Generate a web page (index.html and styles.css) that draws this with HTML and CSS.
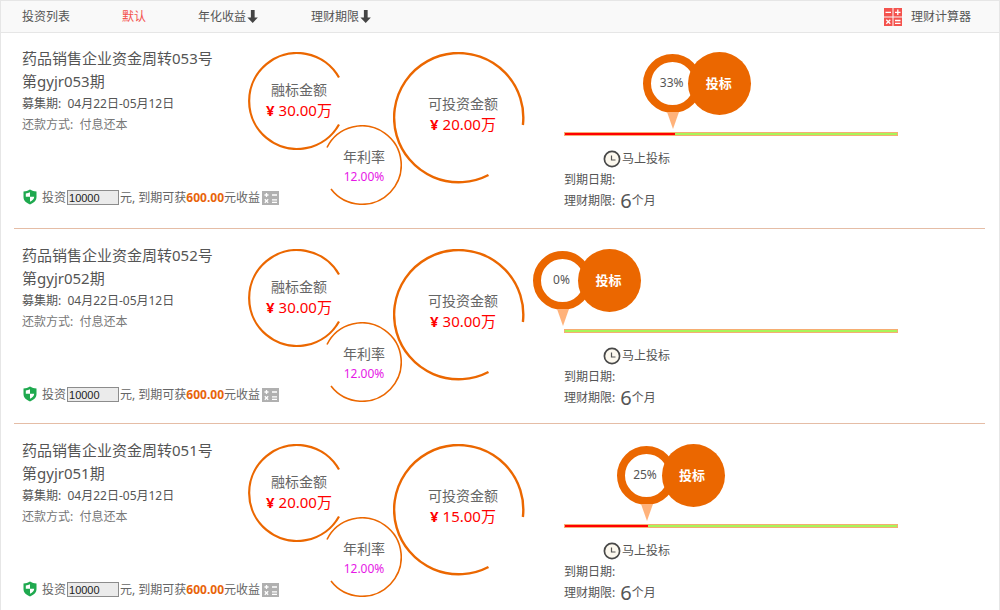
FILE: index.html
```html
<!DOCTYPE html>
<html lang="zh-CN">
<head>
<meta charset="utf-8">
<title>投资列表</title>
<link rel="stylesheet" href="styles.css">
</head>
<body>
<svg class="sprite" aria-hidden="true">
  <symbol id="arrow" viewBox="0 0 10 14"><path d="M3.500 1h3.500v7h3L5.200 13 .2 8h3.300z" fill="#444"/></symbol>
  <symbol id="calculator" viewBox="0 0 20 20">
    <path d="M1 1h8.500v8.500H1zM10.500 1H19v8.500h-8.500zM1 10.500h8.500V19H1zM10.500 10.500H19V19h-8.500z" fill="#f4524d"/>
    <path d="M2.500 5.300H8M12 5.300h5.500M14.800 2.500V8M3.300 12.700l4 4M7.300 12.700l-4 4M12 13.500h5.500M12 16.300h5.500" stroke="#fff" stroke-width="1.300" fill="none"/>
  </symbol>
  <symbol id="sums" viewBox="0 0 17 14">
    <path d="M0 0h17v14H0z" fill="#b0b0b0"/>
    <path d="M2.500 4h4M4.500 2v4M10 4h5M2.800 8.300l3.400 3.400M6.200 8.300l-3.400 3.400M10 8.800h5M10 11.300h5" stroke="#fff" stroke-width="1.300" fill="none"/>
  </symbol>
  <symbol id="shield" viewBox="0 0 14 16">
    <path d="M7 .5c2 1.300 4 1.900 6.500 2V8c0 3.500-2.500 5.800-6.500 7.500C3 13.800.5 11.500.5 8V2.500c2.500-.1 4.500-.7 6.500-2z" fill="#1fa94f"/>
    <path d="M7 3.300v4.500H2.800V4.500C4.400 4.400 5.800 4 7 3.300zM7 7.800h4.200c0 2.300-1.600 3.700-4.200 4.900z" fill="#fff"/>
  </symbol>
  <symbol id="clock" viewBox="0 0 18 18">
    <circle cx="9" cy="9" r="7.600" fill="#fcf8ee" stroke="#484848" stroke-width="1.700"/>
    <path d="M8.500 5.500v4.500h4" fill="none" stroke="#555" stroke-width="1.200"/>
  </symbol>
  <symbol id="ring-total" viewBox="0 0 98 98"><path d="M91 25.500A48 48 0 1 0 91 72.500" fill="none" stroke="#eb6700" stroke-width="2.200"/></symbol>
  <symbol id="ring-rate" viewBox="0 0 80 80"><path d="M5 22.500A39.200 39.200 0 1 1 9 64" fill="none" stroke="#eb6700" stroke-width="1.600"/></symbol>
  <symbol id="ring-open" viewBox="0 0 132 132"><path d="M129.900 73A64.600 64.600 0 1 0 95.500 123" fill="none" stroke="#eb6700" stroke-width="2.400"/></symbol>
</svg>

<div class="page">
  <header class="toolbar">
    <h1 class="toolbar-title">投资列表</h1>
    <nav class="sorts">
      <a class="sort sort-active" href="#">默认</a>
      <a class="sort" href="#">年化收益<svg class="arrow"><use href="#arrow"/></svg></a>
      <a class="sort" href="#">理财期限<svg class="arrow"><use href="#arrow"/></svg></a>
    </nav>
    <a class="calculator" href="#"><svg class="calculator-icon"><use href="#calculator"/></svg>理财计算器</a>
  </header>

  <main class="loans">
    <article class="loan">
      <div class="info">
        <h2 class="title">药品销售企业资金周转053号<br>第gyjr053期</h2>
        <p class="meta">募集期:&nbsp; 04月22日-05月12日</p>
        <p class="meta meta-soft">还款方式:&nbsp; 付息还本</p>
        <div class="invest">
          <svg class="shield"><use href="#shield"/></svg>
          <label for="amount-053">投资</label>
          <input class="amount" id="amount-053" type="text" value="10000">
          <span>元, 到期可获<b class="profit">600.00</b>元收益</span>
          <svg class="sums"><use href="#sums"/></svg>
        </div>
      </div>
      <div class="rings">
        <div class="ring ring-total"><svg class="outline"><use href="#ring-total"/></svg><span>融标金额</span><span class="money"><b>¥</b> 30.00万</span></div>
        <div class="ring ring-rate"><svg class="outline"><use href="#ring-rate"/></svg><span>年利率</span><span class="rate">12.00%</span></div>
        <div class="ring ring-open"><svg class="outline"><use href="#ring-open"/></svg><span>可投资金额</span><span class="money"><b>¥</b> 20.00万</span></div>
      </div>
      <div class="status" style="--progress:33%">
        <div class="marker"><div class="pin">33%</div><button class="bid" type="button">投标</button></div>
        <div class="track"><div class="fill"></div></div>
        <p class="now"><svg class="clock"><use href="#clock"/></svg>马上投标</p>
        <p class="meta">到期日期:</p>
        <p class="meta term">理财期限:<span class="months">6</span>个月</p>
      </div>
    </article>

    <article class="loan">
      <div class="info">
        <h2 class="title">药品销售企业资金周转052号<br>第gyjr052期</h2>
        <p class="meta">募集期:&nbsp; 04月22日-05月12日</p>
        <p class="meta meta-soft">还款方式:&nbsp; 付息还本</p>
        <div class="invest">
          <svg class="shield"><use href="#shield"/></svg>
          <label for="amount-052">投资</label>
          <input class="amount" id="amount-052" type="text" value="10000">
          <span>元, 到期可获<b class="profit">600.00</b>元收益</span>
          <svg class="sums"><use href="#sums"/></svg>
        </div>
      </div>
      <div class="rings">
        <div class="ring ring-total"><svg class="outline"><use href="#ring-total"/></svg><span>融标金额</span><span class="money"><b>¥</b> 30.00万</span></div>
        <div class="ring ring-rate"><svg class="outline"><use href="#ring-rate"/></svg><span>年利率</span><span class="rate">12.00%</span></div>
        <div class="ring ring-open"><svg class="outline"><use href="#ring-open"/></svg><span>可投资金额</span><span class="money"><b>¥</b> 30.00万</span></div>
      </div>
      <div class="status" style="--progress:0%">
        <div class="marker"><div class="pin">0%</div><button class="bid" type="button">投标</button></div>
        <div class="track"><div class="fill"></div></div>
        <p class="now"><svg class="clock"><use href="#clock"/></svg>马上投标</p>
        <p class="meta">到期日期:</p>
        <p class="meta term">理财期限:<span class="months">6</span>个月</p>
      </div>
    </article>

    <article class="loan">
      <div class="info">
        <h2 class="title">药品销售企业资金周转051号<br>第gyjr051期</h2>
        <p class="meta">募集期:&nbsp; 04月22日-05月12日</p>
        <p class="meta meta-soft">还款方式:&nbsp; 付息还本</p>
        <div class="invest">
          <svg class="shield"><use href="#shield"/></svg>
          <label for="amount-051">投资</label>
          <input class="amount" id="amount-051" type="text" value="10000">
          <span>元, 到期可获<b class="profit">600.00</b>元收益</span>
          <svg class="sums"><use href="#sums"/></svg>
        </div>
      </div>
      <div class="rings">
        <div class="ring ring-total"><svg class="outline"><use href="#ring-total"/></svg><span>融标金额</span><span class="money"><b>¥</b> 20.00万</span></div>
        <div class="ring ring-rate"><svg class="outline"><use href="#ring-rate"/></svg><span>年利率</span><span class="rate">12.00%</span></div>
        <div class="ring ring-open"><svg class="outline"><use href="#ring-open"/></svg><span>可投资金额</span><span class="money"><b>¥</b> 15.00万</span></div>
      </div>
      <div class="status" style="--progress:25%">
        <div class="marker"><div class="pin">25%</div><button class="bid" type="button">投标</button></div>
        <div class="track"><div class="fill"></div></div>
        <p class="now"><svg class="clock"><use href="#clock"/></svg>马上投标</p>
        <p class="meta">到期日期:</p>
        <p class="meta term">理财期限:<span class="months">6</span>个月</p>
      </div>
    </article>
  </main>
</div>
</body>
</html>
```

FILE: styles.css
```css
* { box-sizing: border-box; }
body {
  margin: 0;
  background: #fff;
  color: #555;
  font: 12px/21px "Noto Sans", "Noto Sans CJK SC", sans-serif;
}
h1, h2, p { margin: 0; font-weight: 400; }
a { color: inherit; text-decoration: none; }
svg { flex: none; }
.sprite { display: none; }

.page {
  min-height: 100vh;
  border: 1px solid #e6e6e6;
  border-bottom: 0;
}

.toolbar {
  display: flex;
  align-items: center;
  gap: 52px;
  height: 32px;
  padding: 0 28px 0 21px;
  background: #f9f9f9;
  border-bottom: 1px solid #e6e6e6;
}
.toolbar-title { font-size: 12px; }
.sorts { display: flex; gap: 52px; }
.sort { display: flex; align-items: center; }
.sort-active { color: #f4524d; }
.arrow { width: 11px; height: 15px; margin: 0 1px; }
.calculator { display: flex; align-items: center; gap: 8px; margin-left: auto; }
.calculator-icon { width: 20px; height: 20px; }

.loans { padding: 0 14px 0 13px; }
.loan {
  display: grid;
  grid-template-columns: 226px 316px minmax(0, 1fr);
  padding: 15px 0 15px 8px;
  border-bottom: 1px solid #e5bda6;
}
.loan:first-child { padding-top: 14px; padding-bottom: 17px; }
.loan:last-child { padding-bottom: 8px; border-bottom: 0; }

.title { font-size: 15px; line-height: 23px; white-space: nowrap; }
.meta-soft { color: #777; }
.invest {
  display: flex;
  align-items: center;
  margin-top: 52px;
  white-space: nowrap;
  color: #666;
}
.shield { width: 14px; height: 16px; margin: 0 5px 2px 1px; }
.amount {
  flex: none;
  width: 52px;
  height: 15px;
  margin: 0 1px;
  padding: 0 1px;
  border: 1px solid #8c8c8c;
  border-radius: 0;
  background: #ebebeb;
  color: #222;
  font: 11px/13px "Liberation Sans", sans-serif;
}
.profit { color: #e8640a; }
.sums { width: 17px; height: 14px; margin-left: 2px; }

.rings { display: flex; align-items: flex-start; padding-top: 5px; }
.ring {
  position: relative;
  display: flex;
  flex: none;
  flex-direction: column;
  align-items: center;
  justify-content: center;
  font-size: 14px;
  line-height: 20px;
  color: #666;
}
.outline { position: absolute; inset: 0; width: 100%; height: 100%; }
.ring-total { width: 98px; height: 98px; padding: 0 0 2px 4px; }
.ring-rate { width: 80px; height: 80px; margin: 73px 0 0 -24px; padding: 4px 0 0 4px; }
.ring-open { width: 132px; height: 132px; margin-left: -9px; padding: 0 0 8px 8px; }
.money { color: #f00; font-size: 15px; }
.rate { color: #e619e6; font-size: 12px; }

.status { max-width: 334px; padding-top: 5px; }
.marker {
  display: flex;
  align-items: flex-start;
  height: 80px;
  margin-left: calc(var(--progress) - 31px);
}
.pin {
  position: relative;
  display: flex;
  flex: none;
  align-items: center;
  justify-content: center;
  width: 59px;
  height: 59px;
  margin-top: 2px;
  padding: 0 2px 2px 0;
  border: 8px solid #eb6700;
  border-radius: 50%;
}
.pin::after {
  content: "";
  position: absolute;
  top: 50px;
  left: 16px;
  border: 6px solid transparent;
  border-top: 17px solid #ffb27a;
  border-bottom: 0;
}
.bid {
  position: relative;
  flex: none;
  width: 63px;
  height: 63px;
  margin: 0 0 0 -14px;
  padding: 0 2px 2px 0;
  border: 0;
  border-radius: 50%;
  background: #eb6700;
  color: #fff;
  font: 700 13px/20px "Noto Sans", "Noto Sans CJK SC", sans-serif;
}
.track { height: 4px; border: 1px solid #f6ad72; background: #a8f55a; }
.fill { width: var(--progress); height: 2px; background: #f00; }
.now { display: flex; align-items: center; margin: 12px 0 0 39px; }
.clock { width: 18px; height: 18px; margin-right: 1px; }
.term { display: flex; align-items: center; }
.months { margin-left: 5px; font-size: 20px; }
```
